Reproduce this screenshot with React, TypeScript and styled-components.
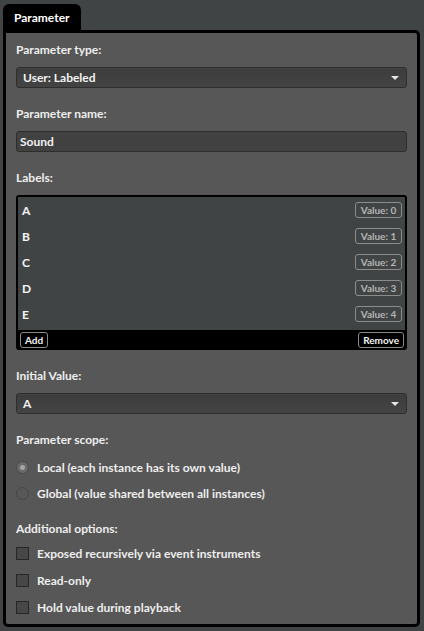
import React from 'react';
import styled, { createGlobalStyle } from 'styled-components';

const GlobalStyle = createGlobalStyle`
  html, body {
    margin: 0;
    padding: 0;
    background: #414445;
  }
  #root {
    min-height: 100vh;
    display: flex;
    flex-direction: column;
  }
  * {
    box-sizing: border-box;
  }
`;

const Page = styled.div`
  flex: 1;
  display: flex;
  flex-direction: column;
  padding: 4px 4px 4px 3px;
  font-family: Lato, 'Liberation Sans', sans-serif;
  font-weight: 700;
  font-size: 12px;
  color: #eeeeee;
`;

const Tab = styled.div`
  align-self: flex-start;
  width: 78px;
  height: 26px;
  padding-left: 11px;
  display: flex;
  align-items: center;
  background: #000;
  border-radius: 6px 6px 0 0;
  color: #fff;
  font-size: 12px;
`;

const Panel = styled.div`
  flex: 1;
  display: flex;
  flex-direction: column;
  gap: 18px;
  padding: 9px 10px 6px 10px;
  background: #575757;
  border: 3px solid #000;
  border-radius: 0 5px 5px 5px;
`;

const Section = styled.section<{ $gap?: number }>`
  display: flex;
  flex-direction: column;
  gap: ${(p) => p.$gap ?? 9}px;
`;

const Label = styled.div`
  height: 16px;
  line-height: 16px;
  color: #eeeeee;
`;

const Select = styled.div`
  height: 21px;
  display: flex;
  align-items: center;
  justify-content: space-between;
  padding: 0 7px 0 6px;
  background: linear-gradient(#3c3c3c, #444444);
  border: 1px solid #2e2e2e;
  border-radius: 3px;
  box-shadow: inset 0 1px 0 rgba(255, 255, 255, 0.04);
  color: #f2f2f2;
`;

const Arrow = styled.span`
  width: 0;
  height: 0;
  border-left: 4px solid transparent;
  border-right: 4px solid transparent;
  border-top: 4px solid #e6e6e6;
`;

const TextInput = styled.div`
  height: 21px;
  display: flex;
  align-items: center;
  padding: 0 3px;
  background: #414141;
  border: 1px solid #2e2e2e;
  border-radius: 3px;
  color: #f2f2f2;
`;

const ListBox = styled.div`
  display: flex;
  flex-direction: column;
  border: 2px solid #000;
  border-radius: 3px;
  background: #000;
`;

const ListItems = styled.ul`
  margin: 0;
  padding: 0;
  list-style: none;
  height: 133px;
  background: #414445;
`;

const ListRow = styled.li`
  height: 26px;
  display: flex;
  align-items: center;
  justify-content: space-between;
  padding: 0 3px 0 4px;
  color: #f4f4f4;
`;

const ValueBadge = styled.span`
  height: 16px;
  width: 47px;
  display: flex;
  align-items: center;
  justify-content: center;
  border: 1px solid #8c8c8c;
  border-radius: 3px;
  font-size: 10px;
  color: #b4b4b4;
`;

const ListFooter = styled.div`
  height: 18px;
  display: flex;
  align-items: flex-end;
  justify-content: space-between;
  padding: 0 1px 0 2px;
`;

const SmallButton = styled.button`
  height: 16px;
  padding: 0 4px;
  display: flex;
  align-items: center;
  background: #000;
  border: 1px solid #8a8a8a;
  border-radius: 3px;
  font-family: inherit;
  font-weight: 700;
  font-size: 10px;
  color: #f2f2f2;
`;

const OptionList = styled.div<{ $gap: number }>`
  display: flex;
  flex-direction: column;
  gap: ${(p) => p.$gap}px;
`;

const OptionRow = styled.div`
  height: 20px;
  display: flex;
  align-items: center;
  gap: 8px;
`;

const Radio = styled.span<{ $checked?: boolean }>`
  width: 13px;
  height: 13px;
  border-radius: 50%;
  display: flex;
  align-items: center;
  justify-content: center;
  background: ${(p) => (p.$checked ? '#6a6a6a' : '#575757')};
  border: 1px solid ${(p) => (p.$checked ? '#4a4a4a' : '#464646')};

  &::after {
    content: '';
    width: 5px;
    height: 5px;
    border-radius: 50%;
    background: ${(p) => (p.$checked ? '#a6a6a6' : 'transparent')};
  }
`;

const Checkbox = styled.span`
  width: 13px;
  height: 13px;
  background: #474747;
  border: 1px solid #262626;
`;

const labels = ['A', 'B', 'C', 'D', 'E'];

const App = () => {
  return (
    <Page>
      <GlobalStyle />
      <Tab>Parameter</Tab>
      <Panel>
        <Section>
          <Label>Parameter type:</Label>
          <Select>
            <span>User: Labeled</span>
            <Arrow />
          </Select>
        </Section>
        <Section>
          <Label>Parameter name:</Label>
          <TextInput>Sound</TextInput>
        </Section>
        <Section>
          <Label>Labels:</Label>
          <ListBox>
            <ListItems>
              {labels.map((l, i) => (
                <ListRow key={l}>
                  <span>{l}</span>
                  <ValueBadge>Value: {i}</ValueBadge>
                </ListRow>
              ))}
            </ListItems>
            <ListFooter>
              <SmallButton>Add</SmallButton>
              <SmallButton>Remove</SmallButton>
            </ListFooter>
          </ListBox>
        </Section>
        <Section>
          <Label>Initial Value:</Label>
          <Select>
            <span>A</span>
            <Arrow />
          </Select>
        </Section>
        <Section>
          <Label>Parameter scope:</Label>
          <OptionList $gap={6}>
            <OptionRow>
              <Radio $checked />
              <span>Local (each instance has its own value)</span>
            </OptionRow>
            <OptionRow>
              <Radio />
              <span>Global (value shared between all instances)</span>
            </OptionRow>
          </OptionList>
        </Section>
        <Section $gap={6}>
          <Label>Additional options:</Label>
          <OptionList $gap={7}>
            <OptionRow>
              <Checkbox />
              <span>Exposed recursively via event instruments</span>
            </OptionRow>
            <OptionRow>
              <Checkbox />
              <span>Read-only</span>
            </OptionRow>
            <OptionRow>
              <Checkbox />
              <span>Hold value during playback</span>
            </OptionRow>
          </OptionList>
        </Section>
      </Panel>
    </Page>
  );
};

export default App;
